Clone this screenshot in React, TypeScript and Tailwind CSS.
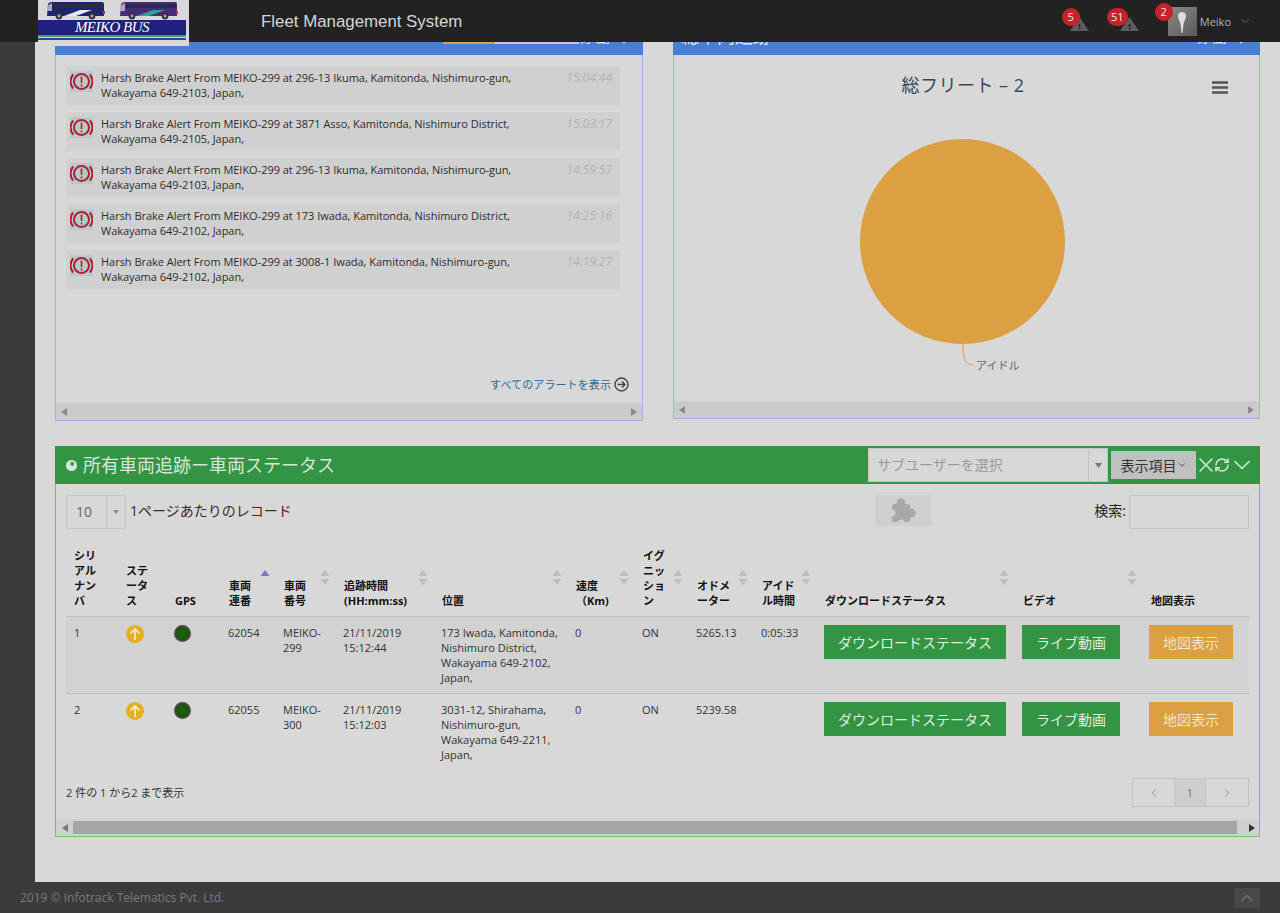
import { ChevronDown, ChevronLeft, ChevronRight, ChevronUp, RefreshCw, X } from "lucide-react";

const alerts = [
  { line1: "Harsh Brake Alert From MEIKO-299 at 296-13 Ikuma, Kamitonda, Nishimuro-gun,", line2: "Wakayama 649-2103, Japan,", time: "15:04:44" },
  { line1: "Harsh Brake Alert From MEIKO-299 at 3871 Asso, Kamitonda, Nishimuro District,", line2: "Wakayama 649-2105, Japan,", time: "15:03:17" },
  { line1: "Harsh Brake Alert From MEIKO-299 at 296-13 Ikuma, Kamitonda, Nishimuro-gun,", line2: "Wakayama 649-2103, Japan,", time: "14:59:57" },
  { line1: "Harsh Brake Alert From MEIKO-299 at 173 Iwada, Kamitonda, Nishimuro District,", line2: "Wakayama 649-2102, Japan,", time: "14:25:16" },
  { line1: "Harsh Brake Alert From MEIKO-299 at 3008-1 Iwada, Kamitonda, Nishimuro-gun,", line2: "Wakayama 649-2102, Japan,", time: "14:19:27" },
];

const columns = [
  { label: "シリ\nアル\nナン\nバ", width: "w-[52px]", sort: "" },
  { label: "ステ\nータ\nス", width: "w-[49px]", sort: "" },
  { label: "GPS", width: "w-[53px]", sort: "" },
  { label: "車両\n連番", width: "w-[55px]", sort: "up" },
  { label: "車両\n番号", width: "w-[60px]", sort: "both" },
  { label: "追跡時間\n(HH:mm:ss)", width: "w-[98px]", sort: "both" },
  { label: "位置", width: "w-[134px]", sort: "both" },
  { label: "速度\n（Km)", width: "w-[67px]", sort: "both" },
  { label: "イグ\nニッ\nショ\nン", width: "w-[54px]", sort: "both" },
  { label: "オドメ\nーター", width: "w-[65px]", sort: "both" },
  { label: "アイド\nル時間", width: "w-[63px]", sort: "both" },
  { label: "ダウンロードステータス", width: "w-[198px]", sort: "both" },
  { label: "ビデオ", width: "w-[128px]", sort: "both" },
  { label: "地図表示", width: "w-[107px]", sort: "" },
];

const rows = [
  { no: 1, serial: "62054", plate: "MEIKO-299", time: "21/11/2019 15:12:44", place: "173 Iwada, Kamitonda, Nishimuro District, Wakayama 649-2102, Japan,", speed: "0", odo: "5265.13", idle: "0:05:33" },
  { no: 2, serial: "62055", plate: "MEIKO-300", time: "21/11/2019 15:12:03", place: "3031-12, Shirahama, Nishimuro-gun, Wakayama 649-2211, Japan,", speed: "0", odo: "5239.58", idle: "" },
];

function Arrow({ dir, className }: { dir: "left" | "right"; className: string }) {
  return (
    <svg width="6" height="8" viewBox="0 0 6 8" className={className}>
      <path d={dir === "left" ? "M6 0V8L0 4Z" : "M0 0V8L6 4Z"} fill="currentColor" />
    </svg>
  );
}

function SortIcon({ sort }: { sort: string }) {
  return (
    <svg width="10" height="15" viewBox="0 0 10 15" className="absolute right-[5px] bottom-[31px]">
      <path d="M5 0L9.5 6H.5Z" fill={sort === "up" ? "#7b78c4" : "#bcbcbc"} />
      {sort === "both" && <path d="M5 15L.5 9h9Z" fill="#bcbcbc" />}
    </svg>
  );
}

function BrakeIcon() {
  return (
    <svg width="23" height="21" viewBox="0 0 23 21" className="shrink-0 bg-[#b7c8cf]">
      <circle cx="11.5" cy="10.5" r="7.5" fill="none" stroke="#b3202a" strokeWidth="2" />
      <path d="M3.2 3.5a10.500 10.500 0 0 0 0 14M19.8 3.5a10.500 10.500 0 0 1 0 14" fill="none" stroke="#b3202a" strokeWidth="2" />
      <path d="M11.5 5.5v6.5M11.5 13.5v2" stroke="#b3202a" strokeWidth="1.6" />
    </svg>
  );
}

function AlertBell({ count, badgeClass }: { count: string; badgeClass: string }) {
  return (
    <div className="relative w-[19px] h-[13px] mt-[5px]">
      <svg width="19" height="14" viewBox="0 0 19 14">
        <path d="M9.5 0L19 14H0Z" fill="#5c5c5c" />
        <path d="M9.5 7v3M9.5 11v1.5" stroke="#222" strokeWidth="1.5" />
      </svg>
      <span className={`absolute top-[-9px] h-[18px] rounded-full bg-[#c6222a] text-[#eee] text-[11px] leading-[18px] text-center ${badgeClass}`}>
        {count}
      </span>
    </div>
  );
}

function Bus({ body, accent }: { body: string; accent: string }) {
  return (
    <svg width="59" height="18" viewBox="0 0 59 18">
      <path d="M2 2Q3 0 6 0H56Q58 0 58 2V14H1Z" fill={body} />
      <rect x="7" y="2" width="50" height="4" fill="#2a2a44" />
      <path d="M1 4L6 1V9H1Z" fill="#aab" />
      <path d="M18 14L34 8H46L30 14Z" fill={accent} />
      <rect x="57" y="9" width="2" height="3" fill="#c0303a" />
      <circle cx="13" cy="14" r="3.4" fill="#333" />
      <circle cx="13" cy="14" r="1.4" fill="#aaa" />
      <circle cx="46" cy="14" r="3.4" fill="#333" />
      <circle cx="46" cy="14" r="1.4" fill="#aaa" />
    </svg>
  );
}

const cell = "px-[8px] pt-[8px] pb-[8px] align-top";

export default function App() {
  return (
    <div className="h-[913px] flex flex-col overflow-hidden bg-[#3b3b3b] font-['Open_Sans','Noto_Sans_CJK_JP',sans-serif] text-[11px] leading-[15px] text-[#333]">
      {/* Top bar */}
      <header className="relative z-10 h-[42px] shrink-0 bg-[#222222] flex items-center">
        <div className="absolute left-[38px] top-0 w-[151px] h-[46px] bg-[#d8d8d8] pt-[2px]">
          <div className="flex gap-[14px] pl-[8px] h-[18px]">
            <Bus body="#1d2470" accent="#e8e8f0" />
            <Bus body="#4a2a7c" accent="#2ea58c" />
          </div>
          <div className="w-[148px] h-[17px] bg-[#20217f] border-b-2 border-[#3fa35a] text-center text-white italic text-[15px] leading-[15px] tracking-[-0.5px] font-['Liberation_Serif',serif]">
            MEIKO BUS
          </div>
          <div className="w-[148px] h-[2px] mt-[1px] bg-[#3a3f9c]" />
        </div>
        <span className="ml-[261px] mt-[1px] font-['Liberation_Sans',sans-serif] text-[16.85px] text-[#d6d6d6]">
          Fleet Management System
        </span>
        <div className="ml-auto flex items-center">
          <AlertBell count="5" badgeClass="left-[-8px] w-[18px]" />
          <div className="w-[31px]" />
          <AlertBell count="51" badgeClass="left-[-13px] w-[21px]" />
          <div className="relative ml-[29px] mt-[1px] w-[29px] h-[29px] bg-gradient-to-br from-[#8a8a8a] to-[#5a5a5a] flex justify-center">
            <svg width="10" height="22" viewBox="0 0 10 22" className="mt-[5px]">
              <path d="M1 4C1 1 3 0 5 0s4 1 4 4c0 3-2 5-2.500 8L5.500 21H4.500L3.500 12C3 9 1 7 1 4Z" fill="#dedede" />
            </svg>
            <span className="absolute left-[-13px] top-[-4px] w-[18px] h-[18px] rounded-full bg-[#c6222a] text-[#eee] text-[11px] leading-[18px] text-center">
              2
            </span>
          </div>
          <span className="ml-[3px] text-[#b4b4b4]">Meiko</span>
          <ChevronDown size={14} strokeWidth={1} className="ml-[7px] mr-[28px] text-[#a0a0a0]" />
        </div>
      </header>

      {/* Body */}
      <div className="flex-1 flex min-h-0">
        <aside className="w-[35px] shrink-0 bg-[#3b3b3b]" />
        <main className="flex-1 bg-[#d8d8d8] overflow-hidden px-[20px]">
          <div className="flex gap-[30px] items-start mt-[-25px]">
            {/* Alerts panel */}
            <section className="w-[588px] h-[404px] flex flex-col border border-[#9db5dc] border-t-0">
              <div className="relative h-[38px] shrink-0 bg-[#477ed8] mx-[-1px] text-[#e8f0ff] text-[16px] leading-[38px]">
                <div className="absolute left-[388px] top-[25px] w-[136px] h-[2px] bg-[#c8c8c8]">
                  <div className="w-[52px] h-full bg-[#dba042]" />
                </div>
                <span className="absolute right-[33px] top-0">稼働</span>
                <ChevronDown size={14} className="absolute right-[12px] top-[17px]" />
              </div>
              <div className="flex-1 flex flex-col gap-[7px] pl-[10px] pr-[22px] pt-[11px]">
                {alerts.map((a) => (
                  <div key={a.time} className="h-[39px] bg-[#d0d0d0] flex pl-[4px] pr-[8px] pt-[5px] gap-[8px] text-[#2c2c2c]">
                    <BrakeIcon />
                    <div className="flex-1 whitespace-nowrap mt-[-1px] tracking-[-0.03px]">
                      {a.line1}
                      <br />
                      {a.line2}
                    </div>
                    <span className="italic text-[12px] mt-[-1px] text-[#b2b2b2]">{a.time}</span>
                  </div>
                ))}
              </div>
              <div className="flex justify-end items-center gap-[3px] pr-[13px] pb-[11px] text-[#2a6a92]">
                <span className="tracking-[0.1px]">すべてのアラートを表示</span>
                <svg width="15" height="15" viewBox="0 0 15 15" fill="none" stroke="#444" strokeWidth="1.4">
                  <circle cx="7.500" cy="7.500" r="6.500" />
                  <path d="M3.500 7.500h7.500M8 4.500l3 3-3 3" />
                </svg>
              </div>
              <div className="h-[17px] shrink-0 bg-[#cbcbcb] flex items-center justify-between px-[5px] text-[#8a8a8a]">
                <Arrow dir="left" className="" />
                <Arrow dir="right" className="" />
              </div>
            </section>

            {/* Fleet chart panel */}
            <section className="relative w-[587px] h-[402px] flex flex-col border border-[#9db5dc] border-t-0">
              <div className="relative h-[38px] shrink-0 bg-[#477ed8] mx-[-1px] text-[#e8f0ff] text-[18px] leading-[38px]">
                <span className="absolute left-[8px] top-0">総車両追跡</span>
                <span className="absolute right-[33px] top-0 text-[16px]">稼働</span>
                <ChevronDown size={14} className="absolute right-[12px] top-[17px]" />
              </div>
              <div className="flex-1 relative">
                <div className="w-[578px] pt-[18px] text-center text-[18px] leading-[24px] tracking-[0.5px] text-[#3c4650]">総フリート – 2</div>
                <svg width="16" height="13" viewBox="0 0 16 13" className="absolute left-[538px] top-[26px]">
                  <path d="M0 1.500h16M0 6.500h16M0 11.500h16" stroke="#555" strokeWidth="2.600" />
                </svg>
                <svg width="585" height="248" viewBox="0 0 585 248" className="block mt-[42px]">
                  <circle cx="288.500" cy="102.500" r="102.500" fill="#dba042" />
                  <path d="M289 205C289 218 291 226 299 226" fill="none" stroke="#dba042" />
                  <text x="302" y="231" fontSize="11" fill="#666666">アイドル</text>
                </svg>
              </div>
              <div className="h-[17px] shrink-0 bg-[#cbcbcb] flex items-center justify-between px-[5px] text-[#8a8a8a]">
                <Arrow dir="left" className="" />
                <Arrow dir="right" className="" />
              </div>
            </section>
          </div>

          {/* Vehicle status panel */}
          <section className="mt-[25px] w-[1205px] border border-[#6cc57a] border-t-0">
            <div className="h-[38px] bg-[#339544] mx-[-1px] flex items-center pl-[11px]">
              <svg width="11" height="11" viewBox="0 0 11 11" className="mr-[6px]">
                <circle cx="5.500" cy="5.500" r="5.500" fill="#d8e8d8" />
                <path d="M5 1.500L8.500 3 7 6 4.500 5Z" fill="#339544" />
              </svg>
              <span className="text-[18px] leading-[24px] text-[#d8e8d8]">所有車両追跡ー車両ステータス</span>
              <div className="ml-auto flex items-center">
                <div className="w-[240px] h-[34px] bg-[#d8d8d8] border border-[#c6c6c6] flex text-[14px] leading-[32px] text-[#9a9a9a]">
                  <span className="flex-1 pl-[8px]">サブユーザーを選択</span>
                  <span className="w-[19px] border-l border-[#c6c6c6] flex items-center justify-center">
                    <svg width="7" height="5" viewBox="0 0 7 5"><path d="M0 0H7L3.500 5Z" fill="#777" /></svg>
                  </span>
                </div>
                <button className="ml-[3px] w-[85px] h-[28px] bg-[#c0c0c0] flex items-center justify-center text-[14px] text-[#333]">
                  表示項目
                  <ChevronDown size={10} strokeWidth={2} />
                </button>
                <div className="flex items-center text-[#d8ecd8] ml-[-2px] pr-[4px]">
                  <X size={24} strokeWidth={1.4} />
                  <RefreshCw size={16} strokeWidth={2.2} className="ml-[-4px]" />
                  <ChevronDown size={28} strokeWidth={1.3} className="ml-[-2px]" />
                </div>
              </div>
            </div>

            <div className="px-[10px] pt-[11px]">
              <div className="flex items-start h-[53px]">
                <div className="w-[60px] h-[34px] border border-[#c6c6c6] flex text-[14px] leading-[32px] text-[#666]">
                  <span className="flex-1 pl-[9px]">10</span>
                  <span className="w-[19px] border-l border-[#c6c6c6] flex items-center justify-center">
                    <svg width="6" height="4" viewBox="0 0 6 4"><path d="M0 0H6L3 4Z" fill="#888" /></svg>
                  </span>
                </div>
                <span className="ml-[4px] text-[14px] leading-[31px] text-[#3a2a2a]">1ページあたりのレコード</span>
                <div className="ml-[583px] w-[56px] h-[31px] bg-[#cfcfcf] flex items-center justify-center">
                  <svg width="28" height="28" viewBox="0 0 28 28">
                    <rect x="3" y="7" width="18" height="18" rx="2" fill="#a8a8a8" />
                    <circle cx="12" cy="6" r="4.500" fill="#a8a8a8" />
                    <circle cx="22" cy="16" r="4.500" fill="#a8a8a8" />
                    <circle cx="3" cy="16" r="3.500" fill="#cfcfcf" />
                    <circle cx="12" cy="26" r="3.500" fill="#cfcfcf" />
                  </svg>
                </div>
                <span className="ml-auto text-[14px] leading-[32px] text-[#222]">検索:</span>
                <div className="ml-[3px] w-[120px] h-[34px] border border-[#c6c6c6]" />
              </div>

              <table className="w-[1183px] table-fixed border-collapse">
                <colgroup>
                  {columns.map((c) => (
                    <col key={c.label} className={c.width} />
                  ))}
                </colgroup>
                <thead>
                  <tr className="border-b border-[#bdbdbd]">
                    {columns.map((c, i) => (
                      <th key={c.label} className={`relative pb-[8px] align-bottom text-left font-bold text-[#111] whitespace-pre-line ${i < 3 ? "pl-[8px]" : "pl-[9px]"}`}>
                        {c.label}
                        {c.sort && <SortIcon sort={c.sort} />}
                      </th>
                    ))}
                  </tr>
                </thead>
                <tbody>
                  {rows.map((r) => (
                    <tr key={r.no} className={`border-b ${r.no === 1 ? "bg-[#d2d2d2] border-[#bdbdbd]" : "border-transparent"}`}>
                      <td className={cell}>{r.no}</td>
                      <td className={cell}>
                        <div className="w-[18px] h-[18px] rounded-full bg-[#e4b01c] flex items-center justify-center">
                          <svg width="12" height="12" viewBox="0 0 12 12" fill="none" stroke="#f4f0e0" strokeWidth="1.600">
                            <path d="M6 12V1M1.500 5.500L6 1l4.500 4.500" />
                          </svg>
                        </div>
                      </td>
                      <td className={cell}>
                        <div className="w-[17px] h-[17px] ml-[-1px] rounded-full bg-[radial-gradient(circle_at_50%_50%,#1c6a0a,#0e4a06)] border-[2px] border-[#4a4a4a]" />
                      </td>
                      <td className={cell}>{r.serial}</td>
                      <td className={cell}>{r.plate}</td>
                      <td className={cell}>{r.time}</td>
                      <td className={cell}>{r.place}</td>
                      <td className={cell}>{r.speed}</td>
                      <td className={cell}>ON</td>
                      <td className={cell}>{r.odo}</td>
                      <td className={`${cell} whitespace-nowrap`}>{r.idle}</td>
                      <td className={cell}>
                        <button className="w-[182px] h-[34px] bg-[#339544] text-[#dff0e0] text-[14px]">ダウンロードステータス</button>
                      </td>
                      <td className={cell}>
                        <button className="w-[98px] h-[34px] bg-[#339544] text-[#dff0e0] text-[14px]">ライブ動画</button>
                      </td>
                      <td className={cell}>
                        <button className="w-[84px] h-[34px] ml-[-1px] bg-[#dba042] text-[#f0e4cc] text-[14px]">地図表示</button>
                      </td>
                    </tr>
                  ))}
                </tbody>
              </table>

              <div className="flex justify-between items-start mt-[7px]">
                <span className="pt-[7px]">2 件の 1 から2 まで表示</span>
                <div className="flex h-[29px] border border-[#c2c2c2] text-[#8a6a50]">
                  <span className="w-[41px] flex items-center justify-center text-[#8a8a8a]"><ChevronLeft size={14} strokeWidth={1.5} /></span>
                  <span className="w-[32px] bg-[#cdcdcd] border-x border-[#c2c2c2] flex items-center justify-center">1</span>
                  <span className="w-[42px] flex items-center justify-center text-[#8a8a8a]"><ChevronRight size={14} strokeWidth={1.5} /></span>
                </div>
              </div>
            </div>

            <div className="mt-[12px] h-[17px] bg-[#d0d0d0] flex items-center pl-[6px]">
              <Arrow dir="left" className="text-[#777] shrink-0" />
              <div className="ml-[5px] w-[1164px] h-[13px] bg-[#a5a5a5]" />
              <Arrow dir="right" className="text-[#333] shrink-0 ml-[12px]" />
            </div>
          </section>
        </main>
      </div>

      {/* Footer */}
      <footer className="h-[31px] shrink-0 bg-[#3b3b3b] flex items-center pl-[20px] pr-[20px] text-[12px] text-[#7a7a7a]">
        <span>2019 © Infotrack Telematics Pvt. Ltd.</span>
        <div className="ml-auto w-[26px] h-[20px] bg-[#484848] flex items-center justify-center text-[#6e6e6e]">
          <ChevronUp size={20} strokeWidth={2} />
        </div>
      </footer>
    </div>
  );
}
